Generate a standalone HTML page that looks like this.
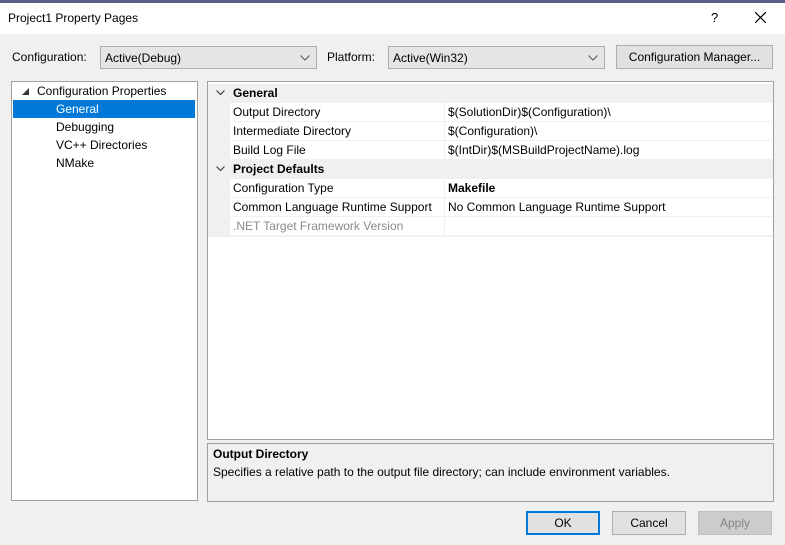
<!DOCTYPE html>
<html><head><style>
*{margin:0;padding:0;box-sizing:border-box}
body{width:785px;height:545px;background:#f0f0f0;font-family:"Liberation Sans",sans-serif;font-size:12px;color:#000;position:relative;overflow:hidden}
.a{position:absolute}
.combo{position:absolute;background:#e5e5e5;border:1px solid #adadad;height:23px;padding:4px 0 0 4px}
.combo svg{position:absolute;right:6px;top:8px}
.btn{position:absolute;background:#e1e1e1;border:1px solid #adadad;text-align:center;padding-top:4px}
.row{position:absolute;left:0;width:565px;height:19px}
.row .n{position:absolute;left:22px;width:214px;top:0;height:18px;background:#fff;padding:2px 0 0 3px}
.row .v{position:absolute;left:237px;right:0;top:0;height:18px;background:#fff;padding:2px 0 0 3px}
.hdr{position:absolute;left:0;width:565px;height:19px;font-weight:bold;padding:2px 0 0 25px}
.hdr svg{position:absolute;left:8px;top:6px}
</style></head><body>
<div class="a" style="left:0;top:0;width:785px;height:3px;background:#5b5e86"></div>
<div class="a" style="left:0;top:3px;width:785px;height:31px;background:#fff"></div>
<div class="a" style="left:8px;top:11px;font-size:12px">Project1 Property Pages</div>
<div class="a" style="left:711px;top:10px;font-size:13px">?</div>
<svg class="a" style="left:755px;top:12px" width="11" height="11"><path d="M0 0L11 11M11 0L0 11" stroke="#000" stroke-width="1.2"/></svg>

<div class="a" style="left:12px;top:50px">Configuration:</div>
<div class="combo" style="left:100px;top:46px;width:217px">Active(Debug)<svg width="10" height="6"><path d="M0.5 0.5L5 5L9.5 0.5" fill="none" stroke="#555"/></svg></div>
<div class="a" style="left:327px;top:50px">Platform:</div>
<div class="combo" style="left:388px;top:46px;width:217px">Active(Win32)<svg width="10" height="6"><path d="M0.5 0.5L5 5L9.5 0.5" fill="none" stroke="#555"/></svg></div>
<div class="btn" style="left:616px;top:45px;width:157px;height:24px">Configuration Manager...</div>

<div class="a" style="left:11px;top:81px;width:187px;height:420px;background:#fff;border:1px solid #a0a0a0">
 <svg class="a" style="left:10px;top:6px" width="7" height="7"><path d="M7 0L7 7L0 7Z" fill="#333"/></svg>
 <div class="a" style="left:25px;top:2px">Configuration Properties</div>
 <div class="a" style="left:1px;top:18px;width:182px;height:18px;background:#0078d7"></div>
 <div class="a" style="left:44px;top:20px;color:#fff">General</div>
 <div class="a" style="left:44px;top:38px">Debugging</div>
 <div class="a" style="left:44px;top:56px">VC++ Directories</div>
 <div class="a" style="left:44px;top:74px">NMake</div>
</div>

<div class="a" style="left:207px;top:81px;width:567px;height:359px;background:#fff;border:1px solid #a0a0a0">
 <div class="a" style="left:0;top:2px;width:565px;height:153px;background:#f0f0f0"></div>
 <div class="hdr" style="top:2px"><svg width="9" height="6"><path d="M0.5 0.5L4.5 4.5L8.5 0.5" fill="none" stroke="#444" stroke-width="1.2"/></svg>General</div>
 <div class="row" style="top:21px"><div class="n">Output Directory</div><div class="v">$(SolutionDir)$(Configuration)\</div></div>
 <div class="row" style="top:40px"><div class="n">Intermediate Directory</div><div class="v">$(Configuration)\</div></div>
 <div class="row" style="top:59px"><div class="n">Build Log File</div><div class="v">$(IntDir)$(MSBuildProjectName).log</div></div>
 <div class="hdr" style="top:78px"><svg width="9" height="6"><path d="M0.5 0.5L4.5 4.5L8.5 0.5" fill="none" stroke="#444" stroke-width="1.2"/></svg>Project Defaults</div>
 <div class="row" style="top:97px"><div class="n">Configuration Type</div><div class="v" style="font-weight:bold">Makefile</div></div>
 <div class="row" style="top:116px"><div class="n">Common Language Runtime Support</div><div class="v">No Common Language Runtime Support</div></div>
 <div class="row" style="top:135px"><div class="n" style="color:#8a8a8a">.NET Target Framework Version</div><div class="v"></div></div>
</div>

<div class="a" style="left:207px;top:443px;width:567px;height:59px;border:1px solid #a0a0a0">
 <div class="a" style="left:5px;top:3px;font-weight:bold">Output Directory</div>
 <div class="a" style="left:5px;top:21px">Specifies a relative path to the output file directory; can include environment variables.</div>
</div>

<div class="btn" style="left:526px;top:511px;width:74px;height:24px;border:2px solid #0078d7;padding-top:3px">OK</div>
<div class="btn" style="left:612px;top:511px;width:74px;height:24px">Cancel</div>
<div class="btn" style="left:698px;top:511px;width:74px;height:24px;background:#cccccc;border-color:#bfbfbf;color:#838383">Apply</div>
</body></html>
